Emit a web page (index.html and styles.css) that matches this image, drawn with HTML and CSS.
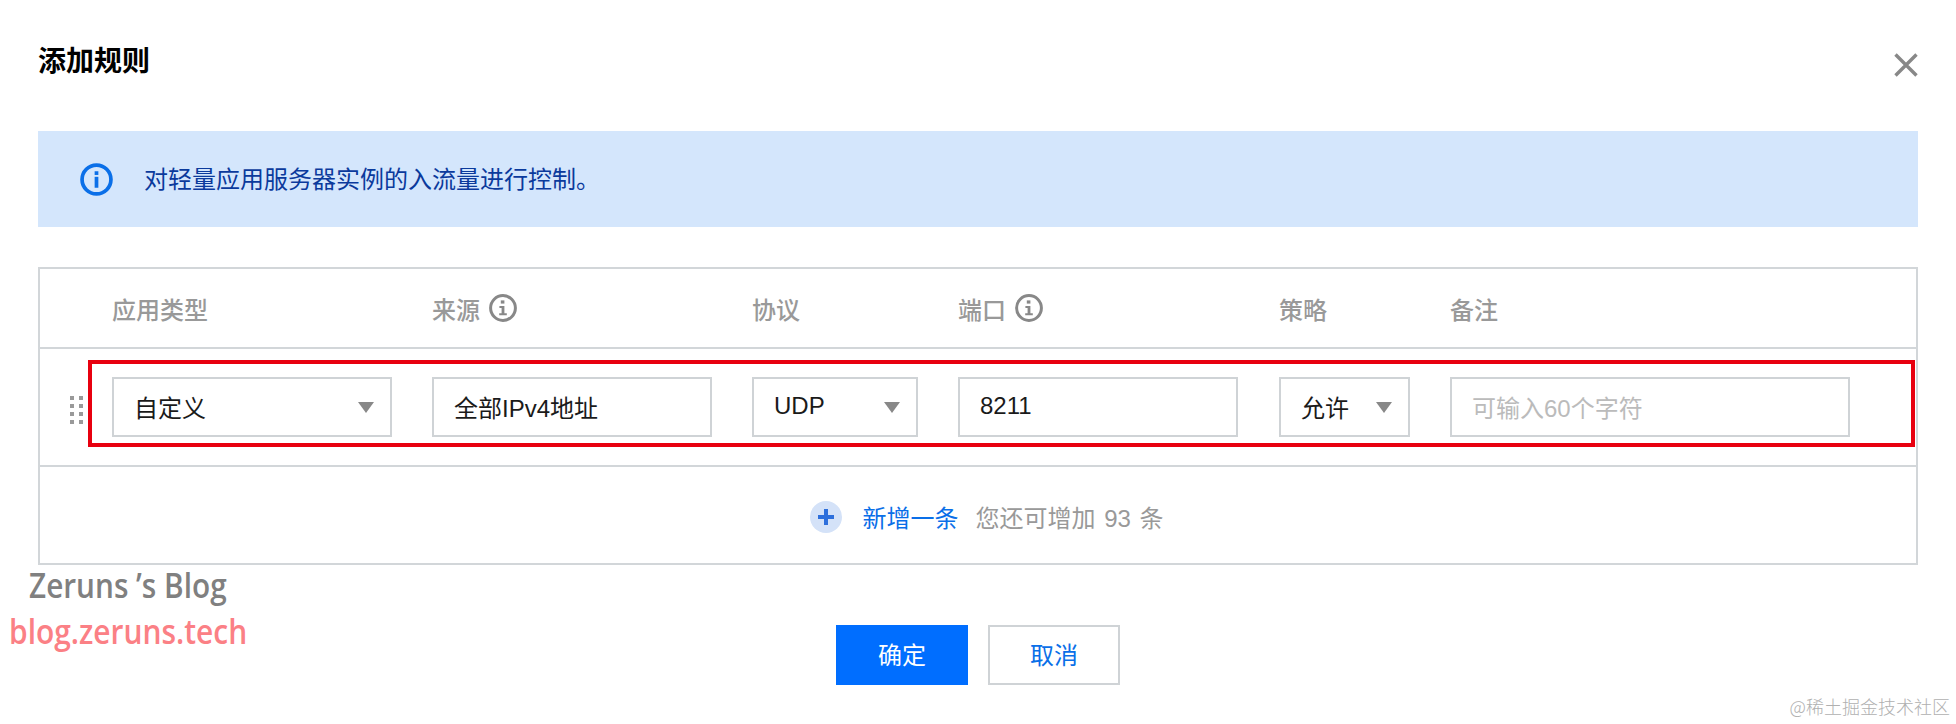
FILE: index.html
```html
<!DOCTYPE html>
<html lang="zh-CN">
<head>
  <meta charset="UTF-8">
  <title>添加规则</title>
  <link rel="stylesheet" href="styles.css">
</head>
<body>
  <div class="dialog">
    <!-- 标题 -->
    <div class="dialog-header">
      <h1 class="dialog-title">添加规则</h1>
      <svg class="close-icon" width="24" height="24" viewBox="0 0 24 24" fill="none" stroke="#888" stroke-width="3.4">
        <path d="M1.5 1.5L22.5 22.5M22.5 1.5L1.5 22.5"/>
      </svg>
    </div>

    <!-- 提示 -->
    <div class="alert">
      <svg class="alert-icon" width="33" height="33" viewBox="0 0 32 32">
        <circle cx="16" cy="16" r="14" fill="none" stroke="#0a6fe8" stroke-width="3.6"/>
        <rect x="14.2" y="8" width="3.6" height="3.6" fill="#0a6fe8"/>
        <rect x="14.2" y="13.4" width="3.6" height="10.6" fill="#0a6fe8"/>
      </svg>
      <span class="alert-text">对轻量应用服务器实例的入流量进行控制。</span>
    </div>

    <!-- 规则表格 -->
    <div class="rule-table">
      <div class="rule-row rule-head">
        <div class="head-cell">应用类型</div>
        <div class="head-cell">来源
          <svg class="info-icon" width="28" height="28" viewBox="0 0 28 28">
            <circle cx="14" cy="14" r="12.4" fill="none" stroke="#888" stroke-width="3"/>
            <rect x="11.8" y="6.4" width="3.6" height="3.2" fill="#888"/>
            <path d="M10.4 12h5v7.2h2.4v2h-7.6v-2h2.4v-5.2h-2.2z" fill="#888"/>
          </svg>
        </div>
        <div class="head-cell">协议</div>
        <div class="head-cell">端口
          <svg class="info-icon" width="28" height="28" viewBox="0 0 28 28">
            <circle cx="14" cy="14" r="12.4" fill="none" stroke="#888" stroke-width="3"/>
            <rect x="11.8" y="6.4" width="3.6" height="3.2" fill="#888"/>
            <path d="M10.4 12h5v7.2h2.4v2h-7.6v-2h2.4v-5.2h-2.2z" fill="#888"/>
          </svg>
        </div>
        <div class="head-cell">策略</div>
        <div class="head-cell">备注</div>
      </div>

      <div class="rule-row rule-body">
        <div class="drag-handle"><i></i><i></i><i></i><i></i><i></i><i></i><i></i><i></i></div>
        <div class="field field-select">自定义</div>
        <div class="field">全部IPv4地址</div>
        <div class="field field-select">UDP</div>
        <div class="field field-port">8211</div>
        <div class="field field-select">允许</div>
        <div class="field field-empty">可输入60个字符</div>
        <div class="red-mark"></div>
      </div>

      <div class="rule-add">
        <span class="add-icon"></span>
        <span class="add-link">新增一条</span>
        <span class="add-hint">您还可增加 93 条</span>
      </div>
    </div>

    <!-- 按钮 -->
    <div class="dialog-footer">
      <button type="button" class="btn btn-primary">确定</button>
      <button type="button" class="btn">取消</button>
    </div>
  </div>

  <!-- 图片水印 -->
  <div class="mark-name">Zeruns ’s Blog</div>
  <div class="mark-url">blog.zeruns.tech</div>
  <div class="mark-juejin">@稀土掘金技术社区</div>
</body>
</html>
```

FILE: styles.css
```css
* {
  box-sizing: border-box;
}
body {
  margin: 0;
  background: #fff;
  color: #1a1a1a;
  font-family: "Liberation Sans", "Noto Sans CJK SC", sans-serif;
  font-size: 24px;
}
.dialog {
  padding: 0 38px;
}
/* 标题 */
.dialog-header {
  display: flex;
  justify-content: space-between;
  align-items: flex-start;
  height: 131px;
  padding-top: 41px;
}
.dialog-title {
  margin: 0;
  font-size: 28px;
  line-height: 42px;
  font-weight: 700;
  color: #000;
}
.close-icon {
  margin-top: 12px;
}
/* 提示 */
.alert {
  display: flex;
  align-items: center;
  gap: 31px;
  height: 96px;
  padding-left: 42px;
  background: #d4e6fc;
  color: #0b3a9c;
}
.alert-text {
  margin-bottom: 4px;
}
/* 规则表格 */
.rule-table {
  margin-top: 40px;
  border: 2px solid #d2d6d9;
}
.rule-row {
  position: relative;
  display: grid;
  grid-template-columns: 280px 280px 166px 281px 131px 400px;
  column-gap: 40px;
  padding-left: 72px;
  border-bottom: 2px solid #d2d6d9;
}
.rule-head {
  height: 80px;
  align-items: center;
}
.head-cell {
  display: flex;
  align-items: center;
  gap: 9px;
  color: #999;
  font-weight: 500;
}
.rule-body {
  height: 118px;
  padding-top: 28px;
}
.field {
  display: flex;
  align-items: center;
  height: 60px;
  padding: 0 16px 2px 20px;
  border: 2px solid #cfd3d6;
}
.field-select {
  justify-content: space-between;
}
.field-select::after {
  content: "";
  border-left: 8px solid transparent;
  border-right: 8px solid transparent;
  border-top: 11px solid #888;
  margin-top: 2px;
}
.field-port {
  margin-right: 1px;
}
.field-empty {
  color: #bbb;
}
.drag-handle {
  position: absolute;
  left: 30px;
  top: 47px;
  display: grid;
  grid-template-columns: 4px 4px;
  grid-auto-rows: 4px;
  gap: 4px 5px;
}
.drag-handle i {
  background: #999;
}
/* 截图上的红框 */
.red-mark {
  position: absolute;
  left: 48px;
  top: 11px;
  width: 1827px;
  height: 87px;
  border: 4px solid #e8000f;
}
.rule-add {
  display: flex;
  align-items: center;
  justify-content: center;
  height: 96px;
  padding: 3px 0 0 18px;
}
.add-icon {
  position: relative;
  width: 32px;
  height: 32px;
  margin-right: 20px;
  border-radius: 50%;
  background: #d4e2f8;
}
.add-icon::before,
.add-icon::after {
  content: "";
  position: absolute;
  background: #2d6fdc;
}
.add-icon::before {
  left: 8px;
  top: 14px;
  width: 16px;
  height: 4px;
}
.add-icon::after {
  left: 14px;
  top: 8px;
  width: 4px;
  height: 16px;
}
.add-link {
  margin-right: 17px;
  color: #0a6fe8;
}
.add-hint {
  color: #999;
  word-spacing: 2px;
}
/* 按钮 */
.dialog-footer {
  display: flex;
  justify-content: center;
  gap: 20px;
  margin-top: 60px;
}
.btn {
  width: 132px;
  height: 60px;
  padding: 0 0 3px;
  border: 2px solid #cfd3d6;
  background: #fff;
  color: #0a6fe8;
  font-family: inherit;
  font-size: 24px;
}
.btn-primary {
  border-color: #006eff;
  background: #006eff;
  color: #fff;
}
/* 水印 */
.mark-name,
.mark-url {
  position: absolute;
  font-family: "Open Sans", sans-serif;
  font-weight: 600;
  white-space: nowrap;
  transform-origin: left top;
}
.mark-name {
  left: 29px;
  top: 564px;
  font-size: 35px;
  line-height: 42px;
  color: #808080;
  transform: scaleX(0.85);
}
.mark-url {
  left: 9px;
  top: 610px;
  font-size: 34px;
  line-height: 42px;
  color: #fb8085;
  transform: scaleX(0.88);
}
.mark-juejin {
  position: absolute;
  right: 6px;
  bottom: 7px;
  font-size: 18px;
  line-height: 22px;
  font-weight: 300;
  color: #b0b0b0;
  font-family: "Noto Sans CJK SC", sans-serif;
}
```
